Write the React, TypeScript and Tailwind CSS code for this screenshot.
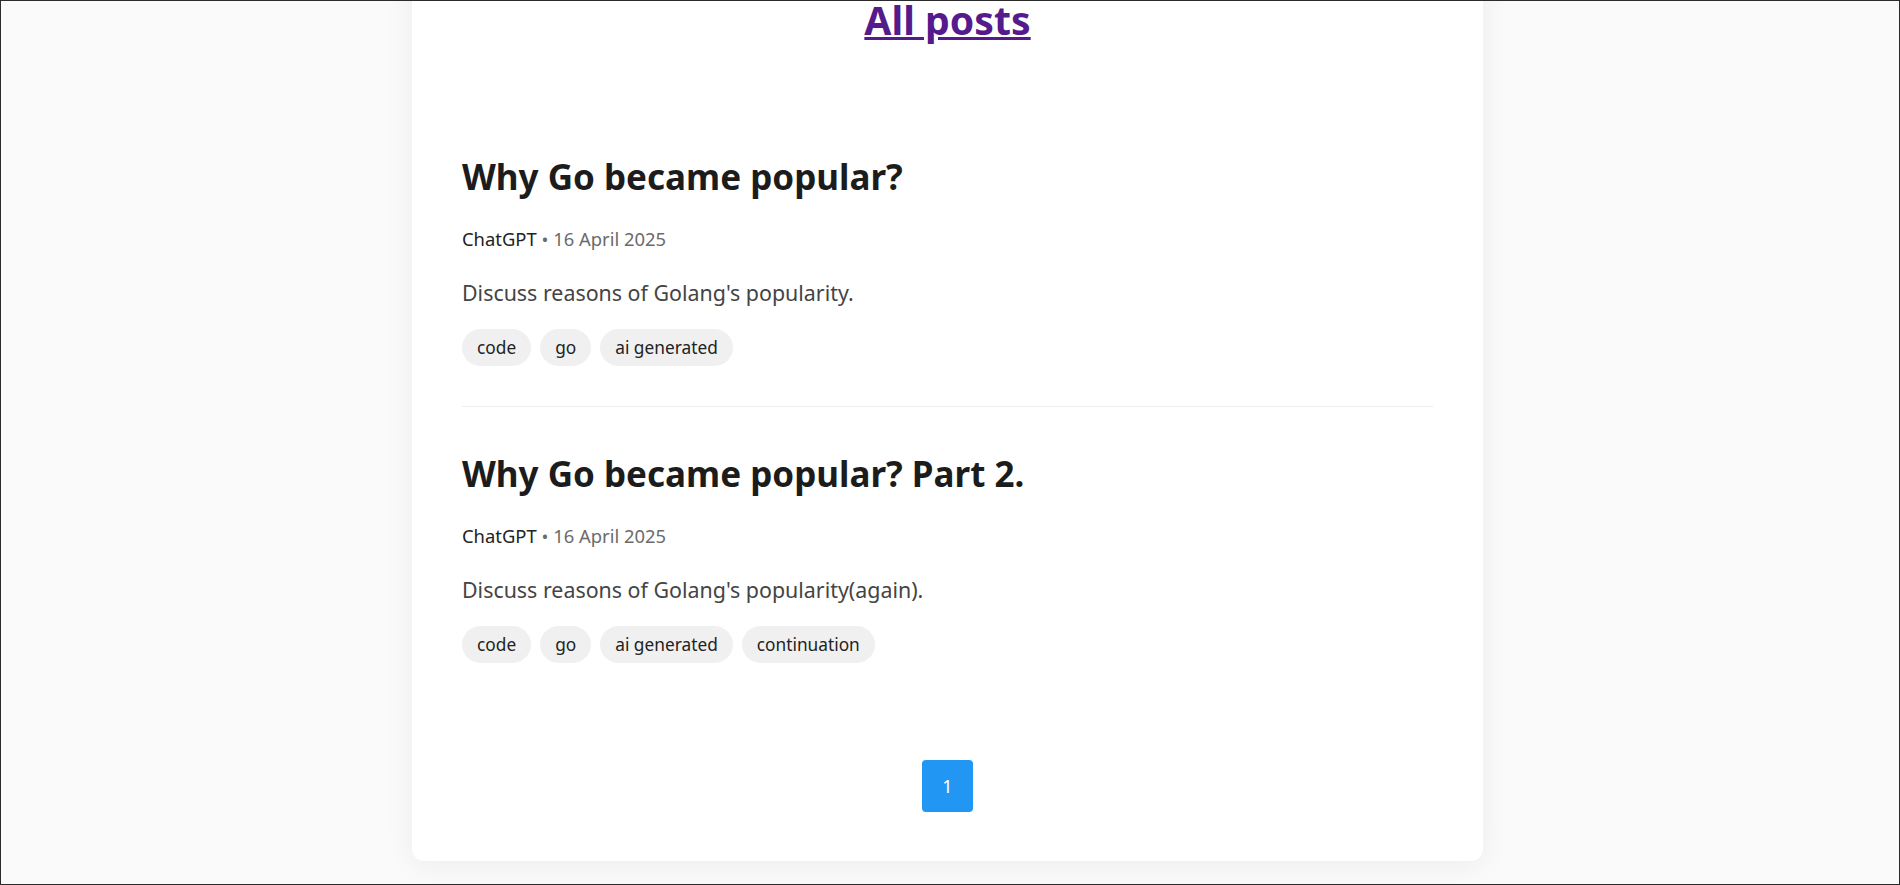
type Post = {
  title: string;
  author: string;
  date: string;
  summary: string;
  tags: string[];
};

const POSTS: Post[] = [
  {
    title: 'Why Go became popular?',
    author: 'ChatGPT',
    date: '16 April 2025',
    summary: "Discuss reasons of Golang's popularity.",
    tags: ['code', 'go', 'ai generated'],
  },
  {
    title: 'Why Go became popular? Part 2.',
    author: 'ChatGPT',
    date: '16 April 2025',
    summary: "Discuss reasons of Golang's popularity(again).",
    tags: ['code', 'go', 'ai generated', 'continuation'],
  },
];

function PostItem({ post, last }: { post: Post; last: boolean }) {
  return (
    <li className={`pt-[46px] pb-[40px] ${last ? '' : 'border-b border-[#eeeeee]'}`}>
      <h2 className="text-[35px] leading-[42px] font-bold text-[#1c1c1c] mb-[29px]">
        <a href="#">{post.title}</a>
      </h2>
      <div className="text-[18.4px] leading-[24px] mb-[28px]">
        <span className="text-[#222222]">{post.author}</span>
        <span className="text-[#6b6b6b]"> • {post.date}</span>
      </div>
      <p className="text-[21.4px] leading-[28px] text-[#444444] mb-[22px]">{post.summary}</p>
      <div className="flex gap-[9px]">
        {post.tags.map((t) => (
          <span key={t} className="px-[15px] py-[7px] rounded-full bg-[#f0f0f0] text-[17.3px] leading-[23px] text-[#222222]">
            {t}
          </span>
        ))}
      </div>
    </li>
  );
}

export default function App() {
  return (
    <div
      className="h-[885px] overflow-hidden border border-[#2b2b2b] bg-[#fafafa]"
      style={{ fontFamily: '"Noto Sans", "Open Sans", sans-serif' }}
    >
      <div className="flex justify-center pr-[5px]">
        <main className="w-[1071px] -mt-[44px] pt-[40px] pb-[49px] px-[50px] bg-white rounded-xl shadow-[0_4px_30px_rgba(0,0,0,0.06)]">
          <h1 className="text-center text-[39.2px] leading-[46px] font-bold mb-[67px]">
            <a href="#" className="text-[#551a8b] underline">All posts</a>
          </h1>
          <ul>
            {POSTS.map((p, i) => (
              <PostItem key={p.title} post={p} last={i === POSTS.length - 1} />
            ))}
          </ul>
          <nav className="mt-[57px] flex justify-center">
            <button type="button" className="w-[51px] h-[52px] rounded-[4px] bg-[#2196f3] text-white text-[18px]">
              1
            </button>
          </nav>
        </main>
      </div>
    </div>
  );
}
